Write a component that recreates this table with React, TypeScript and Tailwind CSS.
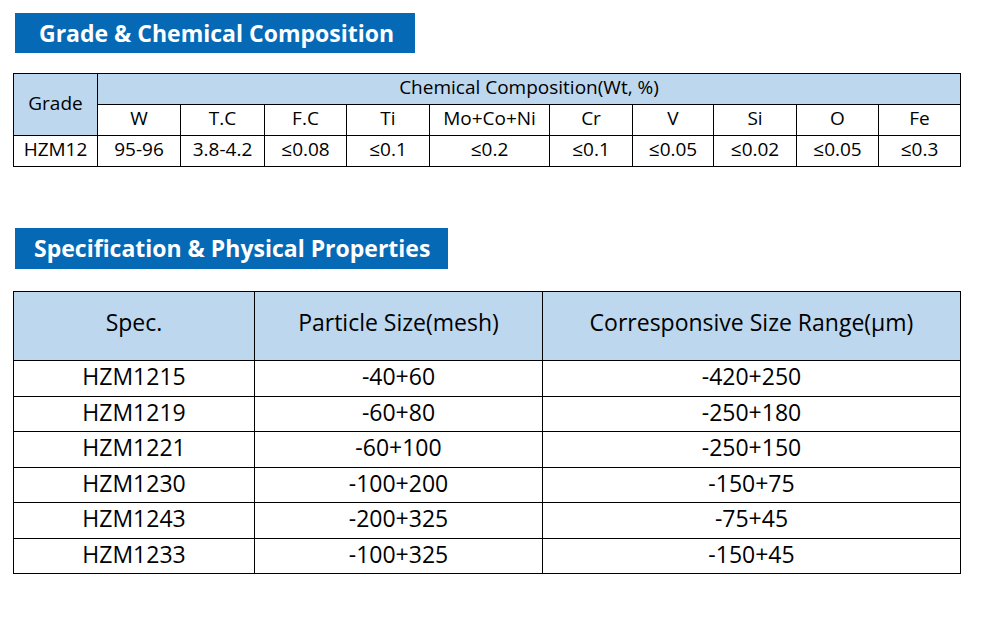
import React from "react";

const font = { fontFamily: '"Open Sans", "Noto Sans", sans-serif' };

const elems = ["W", "T.C", "F.C", "Ti", "Mo+Co+Ni", "Cr", "V", "Si", "O", "Fe"];
const vals = ["95-96", "3.8-4.2", "≤0.08", "≤0.1", "≤0.2", "≤0.1", "≤0.05", "≤0.02", "≤0.05", "≤0.3"];
const widths1 = [84, 83, 84, 82, 83, 120, 83, 81, 83, 82, 82];

const rows2 = [
  ["HZM1215", "-40+60", "-420+250"],
  ["HZM1219", "-60+80", "-250+180"],
  ["HZM1221", "-60+100", "-250+150"],
  ["HZM1230", "-100+200", "-150+75"],
  ["HZM1243", "-200+325", "-75+45"],
  ["HZM1233", "-100+325", "-150+45"],
];

export default function App() {
  return (
    <div className="w-[981px] h-[634px] bg-white text-black" style={font}>
      <div className="pt-[13px] pl-[15px]">
        <div className="w-[400px] h-[40px] bg-[#0669b6] text-white font-bold text-[23px] flex items-center pl-[24px] leading-none">
          Grade &amp; Chemical Composition
        </div>
      </div>
      <div className="pl-[13px] pt-[20px]">
        <table className="border-collapse text-[19px] leading-none">
          <colgroup>
            {widths1.map((w, i) => (
              <col key={i} style={{ width: w }} />
            ))}
          </colgroup>
          <tbody>
            <tr className="h-[31px]">
              <td rowSpan={2} className="border border-black bg-[#bdd7ee] text-center p-0 pb-[3px]">
                Grade
              </td>
              <td colSpan={10} className="border border-black bg-[#bdd7ee] text-center p-0 pb-[4px]">
                Chemical Composition(Wt, %)
              </td>
            </tr>
            <tr className="h-[31px]">
              {elems.map((e) => (
                <td key={e} className="border border-black text-center p-0 pb-[4px]">
                  {e}
                </td>
              ))}
            </tr>
            <tr className="h-[31px]">
              <td className="border border-black text-center p-0 pb-[3px]">HZM12</td>
              {vals.map((v, i) => (
                <td key={i} className="border border-black text-center p-0 pb-[3px]">
                  {v}
                </td>
              ))}
            </tr>
          </tbody>
        </table>
      </div>
      <div className="pt-[61px] pl-[15px]">
        <div className="w-[433px] h-[41px] bg-[#0669b6] text-white font-bold text-[23px] flex items-center pl-[19px] leading-none">
          Specification &amp; Physical Properties
        </div>
      </div>
      <div className="pl-[13px] pt-[22px]">
        <table className="border-collapse text-[23px] leading-none">
          <colgroup>
            <col style={{ width: 241 }} />
            <col style={{ width: 288 }} />
            <col style={{ width: 418 }} />
          </colgroup>
          <tbody>
            <tr className="h-[69px] bg-[#bdd7ee]">
              <td className="border border-black text-center p-0 pb-[7px]">Spec.</td>
              <td className="border border-black text-center p-0 pb-[7px]">Particle Size(mesh)</td>
              <td className="border border-black text-center p-0 pb-[7px]">Corresponsive Size Range(μm)</td>
            </tr>
            {rows2.map((r) => (
              <tr key={r[0]} className="h-[35.5px]">
                {r.map((c, i) => (
                  <td key={i} className="border border-black text-center p-0 pb-[3px]">
                    {c}
                  </td>
                ))}
              </tr>
            ))}
          </tbody>
        </table>
      </div>
    </div>
  );
}
